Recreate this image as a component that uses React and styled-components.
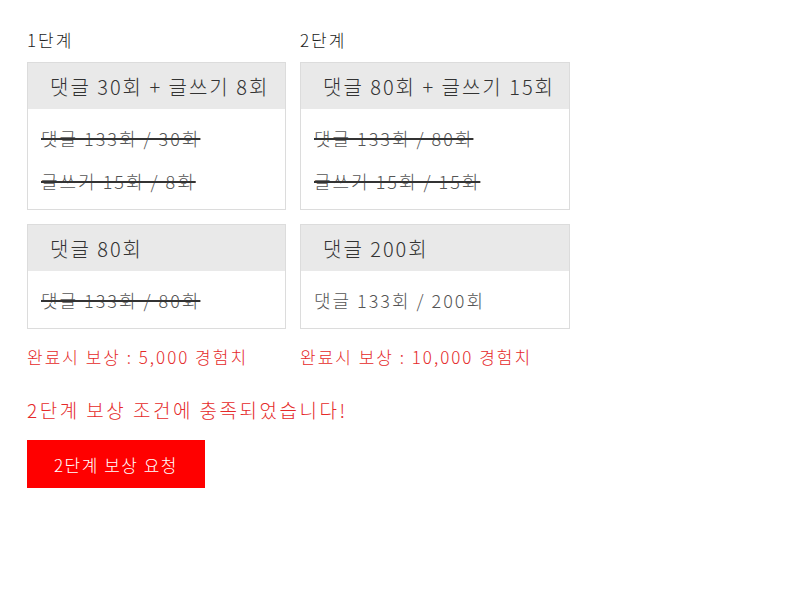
import React from "react";
import styled, { createGlobalStyle } from "styled-components";

const GlobalStyle = createGlobalStyle`
  html, body {
    margin: 0;
    padding: 0;
    background: #fff;
  }
  body {
    font-family: "Noto Sans CJK KR", "Noto Sans", sans-serif;
    color: #333;
  }
`;

const stages = [
  {
    title: "1단계",
    width: 259,
    reward: "완료시 보상 : 5,000 경험치",
    missions: [
      {
        name: "댓글 30회 + 글쓰기 8회",
        rows: [
          { text: "댓글 133회 / 30회", done: true },
          { text: "글쓰기 15회 / 8회", done: true },
        ],
      },
      {
        name: "댓글 80회",
        rows: [{ text: "댓글 133회 / 80회", done: true }],
      },
    ],
  },
  {
    title: "2단계",
    width: 270,
    reward: "완료시 보상 : 10,000 경험치",
    missions: [
      {
        name: "댓글 80회 + 글쓰기 15회",
        rows: [
          { text: "댓글 133회 / 80회", done: true },
          { text: "글쓰기 15회 / 15회", done: true },
        ],
      },
      {
        name: "댓글 200회",
        rows: [{ text: "댓글 133회 / 200회", done: false }],
      },
    ],
  },
];

const Page = styled.div`
  padding: 30px 27px;
`;

const Stages = styled.div`
  display: flex;
  gap: 14px;
  align-items: flex-start;
`;

const Stage = styled.div`
  display: flex;
  flex-direction: column;
  width: ${(p) => p.$width}px;
`;

const StageTitle = styled.div`
  font-size: 17px;
  line-height: 20px;
  font-weight: 300;
  letter-spacing: 2px;
  color: #222;
  margin-bottom: 12px;
`;

const Card = styled.div`
  border: 1px solid #dcdcdc;
  background: #fff;
  & + & {
    margin-top: 14px;
  }
`;

const CardHeader = styled.div`
  background: #e9e9e9;
  height: 46px;
  display: flex;
  align-items: center;
  padding: 0 22px;
  font-size: 20px;
  font-weight: 300;
  letter-spacing: 2px;
  color: #333;
  white-space: nowrap;
`;

const CardBody = styled.div`
  padding: 7px 13px;
`;

const Row = styled.div`
  height: 43px;
  display: flex;
  align-items: center;
  font-size: 18px;
  font-weight: 300;
  letter-spacing: 2px;
  color: #555;
  white-space: nowrap;

  span {
    text-decoration: ${(p) => (p.$done ? "line-through" : "none")};
    text-decoration-color: #333;
    text-decoration-thickness: 2px;
  }
`;

const Reward = styled.div`
  margin-top: 18px;
  font-size: 17px;
  line-height: 20px;
  font-weight: 300;
  letter-spacing: 2px;
  color: #e52a2a;
  white-space: nowrap;
`;

const Message = styled.div`
  margin-top: 33px;
  font-size: 19px;
  line-height: 20px;
  font-weight: 300;
  letter-spacing: 2.5px;
  color: #e52a2a;
`;

const RequestButton = styled.button`
  margin-top: 20px;
  width: 178px;
  height: 48px;
  border: none;
  background: #ff0000;
  color: #fff;
  font-family: inherit;
  font-size: 17px;
  font-weight: 300;
  letter-spacing: 1.5px;
  cursor: pointer;
`;

export default function App() {
  return (
    <>
      <GlobalStyle />
      <Page>
        <Stages>
          {stages.map((stage) => (
            <Stage key={stage.title} $width={stage.width}>
              <StageTitle>{stage.title}</StageTitle>
              {stage.missions.map((m) => (
                <Card key={m.name}>
                  <CardHeader>{m.name}</CardHeader>
                  <CardBody>
                    {m.rows.map((r) => (
                      <Row key={r.text} $done={r.done}>
                        <span>{r.text}</span>
                      </Row>
                    ))}
                  </CardBody>
                </Card>
              ))}
              <Reward>{stage.reward}</Reward>
            </Stage>
          ))}
        </Stages>
        <Message>2단계 보상 조건에 충족되었습니다!</Message>
        <RequestButton>2단계 보상 요청</RequestButton>
      </Page>
    </>
  );
}
